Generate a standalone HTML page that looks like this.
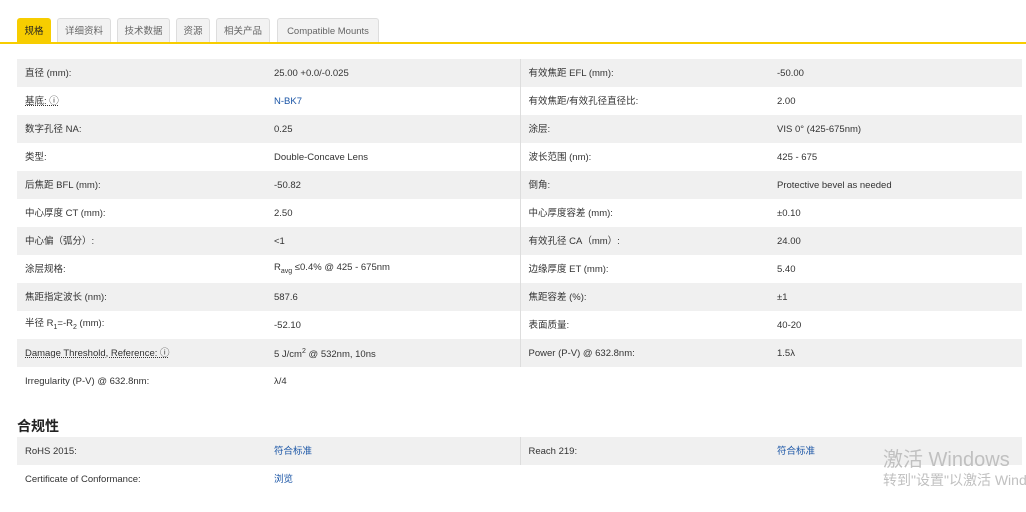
<!DOCTYPE html>
<html><head><meta charset="utf-8"><style>
*{margin:0;padding:0;box-sizing:border-box}
body{width:1026px;height:512px;background:#fff;font-family:"Liberation Sans","Noto Sans CJK SC",sans-serif;font-size:10px;color:#333;position:relative;overflow:hidden}
.tab{position:absolute;top:18px;height:25px;text-align:center;border:1px solid #ddd;border-bottom:none;border-radius:3px 3px 0 0;background:#f2f2f2;color:#666;font-size:9.5px;line-height:26px;white-space:nowrap}
.tab.a{background:#f7cd00;border-color:#f7cd00;color:#222}
.line{position:absolute;left:0;top:42px;width:1026px;height:2px;background:#f7cd00}
table{position:absolute;left:17px;border-collapse:collapse;width:1005px;table-layout:fixed}
td{height:28px;padding:2px 8px 0;vertical-align:middle;white-space:nowrap;font-size:9.5px;line-height:12px}
tr:nth-child(odd) td{background:#f0f0f0}
td:nth-child(3){border-left:1px solid #ddd}
.b{color:#1a55a6}
.u{text-decoration:underline dotted}
h3{position:absolute;left:17px;top:416px;font-size:14px;font-weight:bold;color:#222}
.wm{position:absolute;left:883px;color:#c0c0c0}
</style></head><body>
<div class="tab a" style="left:17px;width:34px">规格</div>
<div class="tab" style="left:57px;width:54px">详细资料</div>
<div class="tab" style="left:117px;width:53px">技术数据</div>
<div class="tab" style="left:176px;width:34px">资源</div>
<div class="tab" style="left:216px;width:54px">相关产品</div>
<div class="tab" style="left:277px;width:102px">Compatible Mounts</div>
<div class="line"></div>
<table style="top:59px"><colgroup><col style="width:249px"><col style="width:254px"><col style="width:249px"><col style="width:253px"></colgroup>
<tr><td>直径 (mm):</td><td>25.00 +0.0/-0.025</td><td>有效焦距 EFL (mm):</td><td>-50.00</td></tr>
<tr><td class="u">基底: ⓘ</td><td class="b">N-BK7</td><td>有效焦距/有效孔径直径比:</td><td>2.00</td></tr>
<tr><td>数字孔径 NA:</td><td>0.25</td><td>涂层:</td><td>VIS 0° (425-675nm)</td></tr>
<tr><td>类型:</td><td>Double-Concave Lens</td><td>波长范围 (nm):</td><td>425 - 675</td></tr>
<tr><td>后焦距 BFL (mm):</td><td>-50.82</td><td>倒角:</td><td>Protective bevel as needed</td></tr>
<tr><td>中心厚度 CT (mm):</td><td>2.50</td><td>中心厚度容差 (mm):</td><td>±0.10</td></tr>
<tr><td>中心偏（弧分）:</td><td>&lt;1</td><td>有效孔径 CA（mm）:</td><td>24.00</td></tr>
<tr><td>涂层规格:</td><td>R<sub style="font-size:7px">avg</sub> ≤0.4% @ 425 - 675nm</td><td>边缘厚度 ET (mm):</td><td>5.40</td></tr>
<tr><td>焦距指定波长 (nm):</td><td>587.6</td><td>焦距容差 (%):</td><td>±1</td></tr>
<tr><td>半径 R<sub style="font-size:7px">1</sub>=-R<sub style="font-size:7px">2</sub> (mm):</td><td>-52.10</td><td>表面质量:</td><td>40-20</td></tr>
<tr><td class="u">Damage Threshold, Reference: ⓘ</td><td>5 J/cm<sup style="font-size:7px">2</sup> @ 532nm, 10ns</td><td>Power (P-V) @ 632.8nm:</td><td>1.5λ</td></tr>
<tr><td>Irregularity (P-V) @ 632.8nm:</td><td>λ/4</td><td style="border-left:none"></td><td></td></tr>
</table>
<h3>合规性</h3>
<table style="top:437px"><colgroup><col style="width:249px"><col style="width:254px"><col style="width:249px"><col style="width:253px"></colgroup>
<tr><td>RoHS 2015:</td><td class="b">符合标准</td><td>Reach 219:</td><td class="b">符合标准</td></tr>
<tr><td>Certificate of Conformance:</td><td class="b">浏览</td><td style="border-left:none"></td><td></td></tr>
</table>
<div class="wm" style="top:443px;font-size:20px">激活 Windows</div>
<div class="wm" style="top:470px;font-size:14px;white-space:nowrap">转到"设置"以激活 Windows</div>
</body></html>
